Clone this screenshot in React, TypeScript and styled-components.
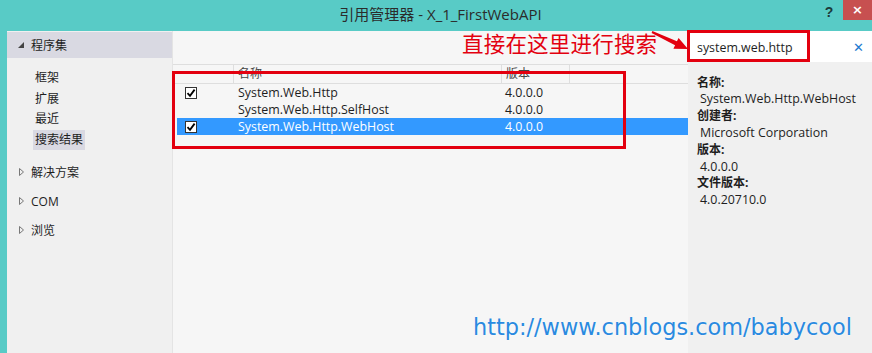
import styled, { createGlobalStyle } from "styled-components";

// colours
const TEAL = "#58cbc6";
const RED = "#e3000f";
const UI_FONT = `"Open Sans", "Noto Sans CJK SC", sans-serif`;

const GlobalStyle = createGlobalStyle`
  html, body {
    margin: 0;
    padding: 0;
    background: #f0f0f0;
    overflow: hidden;
  }
  * {
    box-sizing: border-box;
  }
`;

// window frame
const Window = styled.div`
  position: relative;
  width: 872px;
  height: 353px;
  display: flex;
  flex-direction: column;
  font-family: ${UI_FONT};
  color: #1e1e1e;
  overflow: hidden;
`;

const TitleBar = styled.div`
  height: 31px;
  flex: none;
  display: flex;
  align-items: flex-start;
  background: ${TEAL};
`;

const Title = styled.div`
  flex: 1;
  height: 31px;
  line-height: 29px;
  padding-left: 66px;
  text-align: center;
  font-size: 15px;
  color: #2b2b2b;
`;

const HelpButton = styled.div`
  width: 28px;
  height: 24px;
  line-height: 24px;
  text-align: center;
  font-family: "Liberation Sans", sans-serif;
  font-weight: bold;
  font-size: 14px;
  color: #1c3a3a;
`;

const CloseButton = styled.div`
  width: 29px;
  height: 20px;
  line-height: 19px;
  text-align: center;
  background: #c75050;
  color: #fff;
  font-family: "DejaVu Sans", sans-serif;
  font-weight: bold;
  font-size: 13px;
`;

const Body = styled.div`
  flex: 1;
  display: flex;
  border-left: 7px solid ${TEAL};
`;

// left pane
const Sidebar = styled.div`
  width: 165px;
  flex: none;
  padding-top: 1px;
  background: #f0f0f0;
  font-size: 12px;
`;

const SectionHeader = styled.div`
  height: 26px;
  display: flex;
  align-items: center;
  padding-left: 10px;
  background: #d9d9e2;
`;

const Arrow = styled.span`
  width: 8px;
  margin-right: 6px;
  display: inline-flex;
  align-items: center;
  justify-content: center;
`;

const SubList = styled.div`
  padding-top: 10px;
`;

const SubItem = styled.div`
  height: 20.5px;
  display: flex;
  align-items: center;
  padding-left: 26px;
`;

const SubLabel = styled.span<{ selected?: boolean }>`
  height: 20px;
  line-height: 20px;
  padding: 0 2px;
  background: ${({ selected }) => (selected ? "#d9d9e2" : "transparent")};
`;

const Groups = styled.div`
  margin-top: 8px;
`;

const Group = styled.div`
  height: 28.7px;
  display: flex;
  align-items: center;
  padding-left: 10px;
`;

// center pane
const Center = styled.div`
  width: 516px;
  flex: none;
  background: #f6f6f6;
  border-left: 1px solid #e4e4e4;
`;

const Toolbar = styled.div`
  height: 33px;
`;

const HeaderRow = styled.div`
  display: grid;
  grid-template-columns: 60px 268px 68px 1fr;
  height: 20px;
  border-top: 1px solid #dedede;
  border-bottom: 1px solid #dedede;
  font-size: 12px;
  color: #444;
`;

const HeaderCell = styled.div`
  line-height: 18px;
  padding-left: 4px;
  border-left: 1px solid #dedede;
  &:first-child {
    border-left: none;
  }
`;

const Rows = styled.div`
  margin: 1px 0 0 4px;
`;

const Row = styled.div<{ selected?: boolean }>`
  display: grid;
  grid-template-columns: 56px 268px 68px 1fr;
  height: 16.7px;
  align-items: center;
  font-size: 12.4px;
  background: ${({ selected }) => (selected ? "#3399ff" : "transparent")};
  color: ${({ selected }) => (selected ? "#fff" : "#1e1e1e")};
`;

const CheckCell = styled.div`
  padding-left: 8px;
  display: flex;
  align-items: center;
`;

const Box = styled.span`
  width: 12px;
  height: 12px;
  border: 1px solid #333;
  background: #fff;
  display: inline-flex;
  align-items: center;
  justify-content: center;
`;

const TextCell = styled.div<{ pad: number }>`
  padding-left: ${({ pad }) => pad}px;
  white-space: nowrap;
  line-height: 16px;
`;

// right pane
const Details = styled.div`
  flex: 1;
  background: #f0f0f0;
`;

const SearchBar = styled.div`
  height: 31px;
  display: flex;
  align-items: center;
  justify-content: space-between;
  padding: 2px 8px 0 9px;
  background: #fff;
  font-size: 12.4px;
`;

const ClearButton = styled.span`
  color: #1e7ad0;
  font-family: "DejaVu Sans", sans-serif;
  font-size: 13px;
`;

const Info = styled.div`
  padding: 12.6px 0 0 9px;
  font-size: 12.4px;
  line-height: 16.8px;
`;

const InfoLabel = styled.div`
  font-weight: bold;
  font-size: 12px;
`;

const InfoValue = styled.div`
  padding-left: 3px;
  white-space: nowrap;
`;

// annotations drawn on the screenshot
const Highlight = styled.div<{ x: number; y: number; w: number; h: number }>`
  position: absolute;
  left: ${({ x }) => x}px;
  top: ${({ y }) => y}px;
  width: ${({ w }) => w}px;
  height: ${({ h }) => h}px;
  border: 3px solid ${RED};
  pointer-events: none;
`;

const Callout = styled.div`
  position: absolute;
  left: 462px;
  top: 29px;
  font-family: "Noto Sans CJK SC", sans-serif;
  font-size: 21.5px;
  line-height: 28px;
  color: ${RED};
  letter-spacing: 0.2px;
`;

const CalloutArrow = styled.svg`
  position: absolute;
  left: 648px;
  top: 28px;
`;

const Watermark = styled.div`
  position: absolute;
  left: 473px;
  top: 314px;
  font-family: "DejaVu Sans", sans-serif;
  font-size: 22.4px;
  color: #2a8ae0;
  text-shadow: 0 0 2px rgba(255, 255, 255, 0.9);
`;

function Check(): JSX.Element {
  return (
    <svg width="10" height="10" viewBox="0 0 10 10">
      <path d="M1.5 5.2 L4 7.8 L8.6 1.6" fill="none" stroke="#000" strokeWidth="1.8" />
    </svg>
  );
}

function Tri({ open }: { open?: boolean }): JSX.Element {
  return open ? (
    <svg width="6" height="6" viewBox="0 0 6 6">
      <path d="M6 0 L6 6 L0 6 Z" fill="#444" />
    </svg>
  ) : (
    <svg width="5" height="8" viewBox="0 0 5 8">
      <path d="M0.5 0.5 L4.5 4 L0.5 7.5 Z" fill="none" stroke="#777" strokeWidth="1" />
    </svg>
  );
}

const refs = [
  { name: "System.Web.Http", version: "4.0.0.0", checked: true },
  { name: "System.Web.Http.SelfHost", version: "4.0.0.0", checked: false },
  { name: "System.Web.Http.WebHost", version: "4.0.0.0", checked: true, selected: true },
];

const info = [
  { label: "名称:", value: "System.Web.Http.WebHost" },
  { label: "创建者:", value: "Microsoft Corporation" },
  { label: "版本:", value: "4.0.0.0" },
  { label: "文件版本:", value: "4.0.20710.0" },
];

export default function App(): JSX.Element {
  return (
    <>
      <GlobalStyle />
      <Window>
        <TitleBar>
          <Title>引用管理器 - X_1_FirstWebAPI</Title>
          <HelpButton>?</HelpButton>
          <CloseButton>×</CloseButton>
        </TitleBar>

        <Body>
          {/* left: categories */}
          <Sidebar>
            <SectionHeader>
              <Arrow>
                <Tri open />
              </Arrow>
              程序集
            </SectionHeader>
            <SubList>
              <SubItem>
                <SubLabel>框架</SubLabel>
              </SubItem>
              <SubItem>
                <SubLabel>扩展</SubLabel>
              </SubItem>
              <SubItem>
                <SubLabel>最近</SubLabel>
              </SubItem>
              <SubItem>
                <SubLabel selected>搜索结果</SubLabel>
              </SubItem>
            </SubList>
            <Groups>
              {["解决方案", "COM", "浏览"].map((g) => (
                <Group key={g}>
                  <Arrow>
                    <Tri />
                  </Arrow>
                  {g}
                </Group>
              ))}
            </Groups>
          </Sidebar>

          {/* center: results list */}
          <Center>
            <Toolbar />
            <HeaderRow>
              <HeaderCell />
              <HeaderCell>名称</HeaderCell>
              <HeaderCell>版本</HeaderCell>
              <HeaderCell />
            </HeaderRow>
            <Rows>
              {refs.map((r) => (
                <Row key={r.name} selected={r.selected}>
                  <CheckCell>
                    {r.checked && (
                      <Box>
                        <Check />
                      </Box>
                    )}
                  </CheckCell>
                  <TextCell pad={5}>{r.name}</TextCell>
                  <TextCell pad={4}>{r.version}</TextCell>
                  <div />
                </Row>
              ))}
            </Rows>
          </Center>

          {/* right: search + details */}
          <Details>
            <SearchBar>
              <span>system.web.http</span>
              <ClearButton>✕</ClearButton>
            </SearchBar>
            <Info>
              {info.map((i) => (
                <div key={i.label}>
                  <InfoLabel>{i.label}</InfoLabel>
                  <InfoValue>{i.value}</InfoValue>
                </div>
              ))}
            </Info>
          </Details>
        </Body>

        {/* annotations */}
        <Highlight x={687} y={30} w={123} h={32} />
        <Highlight x={172} y={71} w={454} h={78} />
        <Callout>直接在这里进行搜索</Callout>
        <CalloutArrow width="44" height="26" viewBox="0 0 44 26">
          <polygon
            points="4.4,3.1 28.9,13.3 30.6,9.9 40,21 25.4,20.7 27.1,17.3 3.6,4.9"
            fill={RED}
          />
        </CalloutArrow>
        <Watermark>http://www.cnblogs.com/babycool</Watermark>
      </Window>
    </>
  );
}
